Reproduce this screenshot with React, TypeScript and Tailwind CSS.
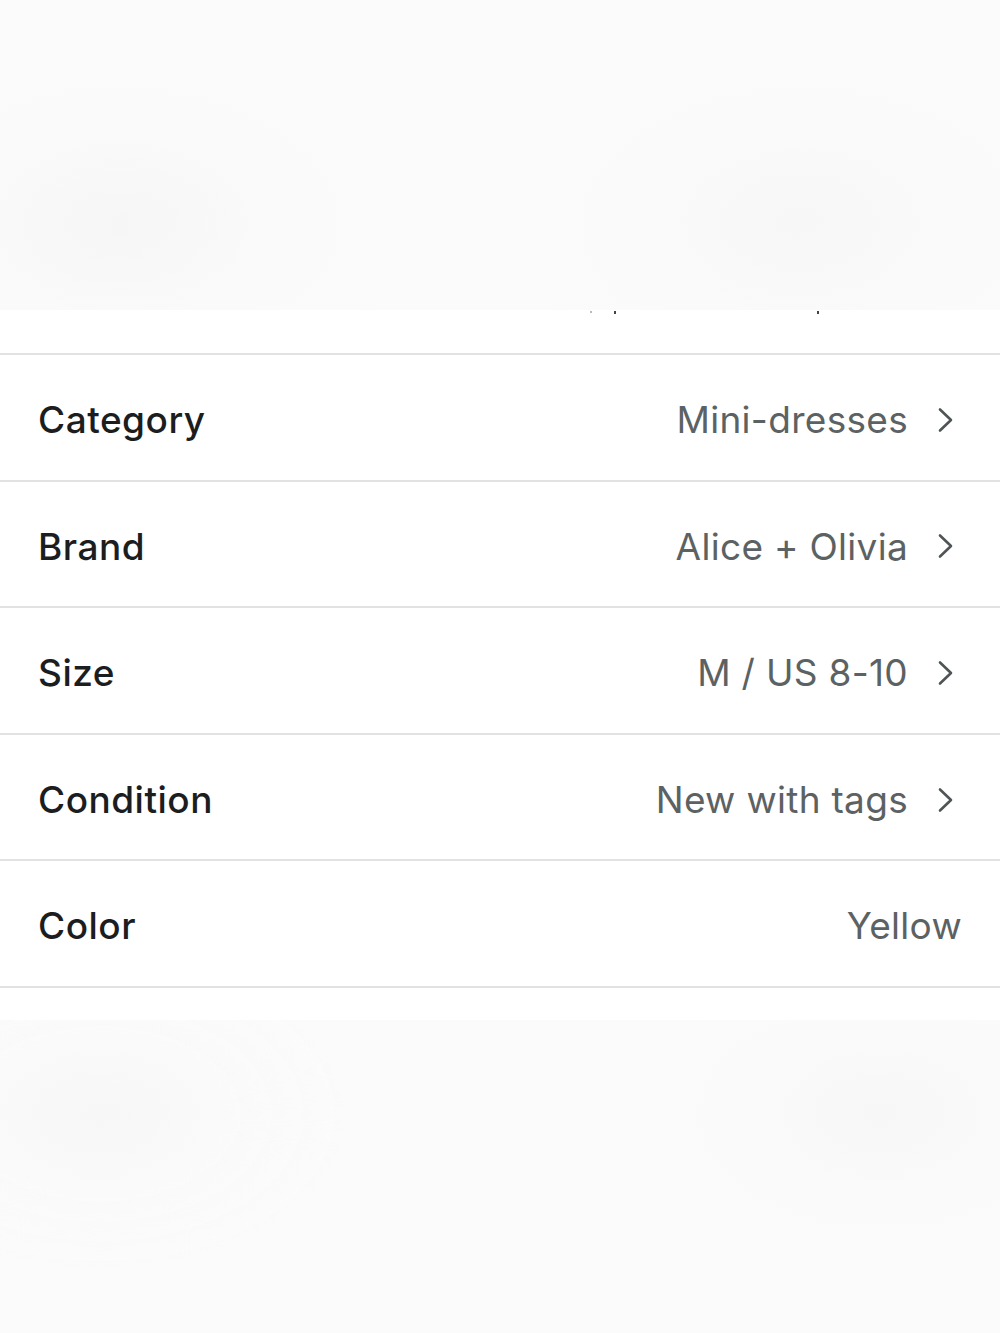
import React from 'react';

interface Attr {
  label: string;
  value: string;
  link: boolean;
}

const attrs: Attr[] = [
  { label: 'Category', value: 'Mini-dresses', link: true },
  { label: 'Brand', value: 'Alice + Olivia', link: true },
  { label: 'Size', value: 'M / US 8-10', link: true },
  { label: 'Condition', value: 'New with tags', link: true },
  { label: 'Color', value: 'Yellow', link: false },
];

const Chevron: React.FC = () => (
  <svg width="20" height="28" viewBox="0 0 20 28" fill="none" className="ml-[28px] mr-[6px]">
    <path d="M4 3.5 L15 14 L4 24.5" stroke="#4f5556" strokeWidth="2.6" strokeLinecap="round" strokeLinejoin="round" />
  </svg>
);

const App: React.FC = () => {
  return (
    <div className="min-h-[1333px] flex flex-col bg-white" style={{ fontFamily: 'Inter, "Noto Sans", sans-serif' }}>
      {/* blurred photo area above the sheet */}
      <div className="h-[310px] bg-[#fbfbfb] bg-[radial-gradient(ellipse_30%_60%_at_12%_72%,#f6f6f6_0%,#fafafa_50%,transparent_100%),radial-gradient(ellipse_30%_60%_at_80%_72%,#f7f7f7_0%,#fafafa_50%,transparent_100%)]" />

      <div className="bg-white">
        {/* cut-off previous row */}
        <div className="h-[45px] border-b-2 border-[#e2e2e2] relative">
          <span className="absolute left-[590px] top-[1px] w-[2px] h-[2px] bg-[#bbb]" />
          <span className="absolute left-[614px] top-[1px] w-[2px] h-[3px] bg-[#444]" />
          <span className="absolute left-[817px] top-[1px] w-[2px] h-[3px] bg-[#444]" />
        </div>
        {attrs.map(a => (
          <div key={a.label} className="h-[126.6px] border-b-2 border-[#e2e2e2] flex items-center pt-[5px] pl-[38px] pr-[38px]">
            <span className="text-[37px] font-medium text-[#1b1d1e] tracking-[0.5px]">{a.label}</span>
            <span className="ml-auto text-[37px] text-[#5c6263] tracking-[0.3px]">{a.value}</span>
            {a.link && <Chevron />}
          </div>
        ))}
        <div className="h-[32px]" />
      </div>

      <div className="flex-1 bg-[#fbfbfb] bg-[radial-gradient(ellipse_25%_50%_at_10%_30%,#f7f7f7_0%,#fafafa_50%,transparent_100%),radial-gradient(ellipse_25%_50%_at_88%_30%,#f7f7f7_0%,#fafafa_50%,transparent_100%)]" />
    </div>
  );
};

export default App;
